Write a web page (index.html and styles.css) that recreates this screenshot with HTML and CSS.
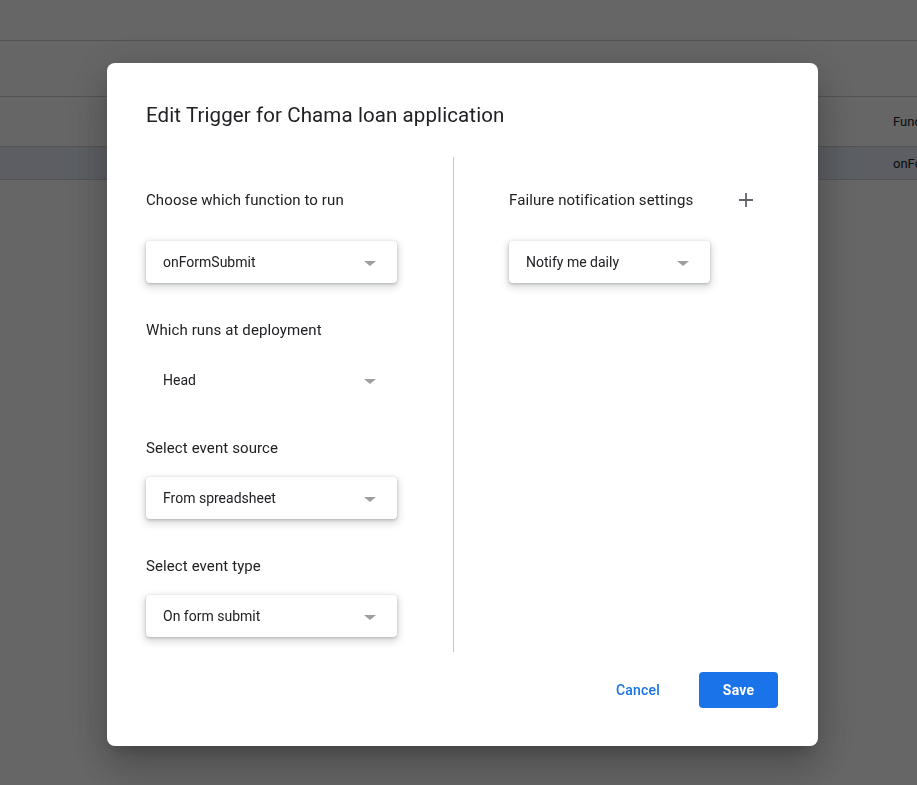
FILE: index.html
```html
<!DOCTYPE html>
<html lang="en">
<head>
<meta charset="utf-8">
<title>Edit Trigger</title>
<link rel="stylesheet" href="styles.css">
</head>
<body>
<div class="page">
  <div class="topbar"></div>
  <div class="toolbar"></div>
  <div class="table-head"><span class="cell">Function</span></div>
  <div class="table-row"><span class="cell">onFormSubmit</span></div>
</div>

<div class="overlay">
  <div class="dialog">
    <h1 class="title">Edit Trigger for Chama loan application</h1>
    <div class="content">
      <div class="col col-left">
        <div class="head-row"><span class="label">Choose which function to run</span></div>
        <div class="select raised"><span>onFormSubmit</span><i class="arrow"></i></div>

        <div class="label sect">Which runs at deployment</div>
        <div class="select flat"><span>Head</span><i class="arrow"></i></div>

        <div class="label sect">Select event source</div>
        <div class="select raised"><span>From spreadsheet</span><i class="arrow"></i></div>

        <div class="label sect">Select event type</div>
        <div class="select raised"><span>On form submit</span><i class="arrow"></i></div>
      </div>
      <div class="divider"></div>
      <div class="col col-right">
        <div class="head-row">
          <span class="label">Failure notification settings</span>
          <span class="plus">
            <svg width="16" height="16" viewBox="0 0 16 16"><path d="M8 1v14M1 8h14" stroke="#5f6368" stroke-width="1.8" fill="none"/></svg>
          </span>
        </div>
        <div class="select raised narrow"><span>Notify me daily</span><i class="arrow"></i></div>
      </div>
    </div>
    <div class="actions">
      <button class="btn btn-text">Cancel</button>
      <button class="btn btn-primary">Save</button>
    </div>
  </div>
</div>
</body>
</html>
```

FILE: styles.css
```css
* { box-sizing: border-box; }
html, body { margin: 0; padding: 0; }
body {
  width: 917px;
  height: 785px;
  overflow: hidden;
  background: #fff;
  font-family: Roboto, "Liberation Sans", Arial, sans-serif;
  color: #202124;
}

.page { width: 917px; }
.topbar { height: 41px; border-bottom: 1px solid #d0d0d0; }
.toolbar { height: 56px; border-bottom: 1px solid #d0d0d0; }
.table-head, .table-row {
  display: flex;
  align-items: center;
  padding-left: 893px;
  border-bottom: 1px solid #d0d0d0;
  font-size: 13px;
  color: #202124;
  overflow: hidden;
}
.table-head { height: 50px; }
.table-row { height: 33px; background: #e6ecf7; }
.cell { white-space: nowrap; }

.overlay {
  position: fixed;
  inset: 0;
  background: rgba(0, 0, 0, 0.6);
  padding: 63px 0 0 107px;
}

.dialog {
  width: 711px;
  height: 683px;
  background: #fff;
  border-radius: 8px;
  padding: 37px 40px 38px 39px;
  box-shadow: 0 24px 38px 3px rgba(0,0,0,.14), 0 9px 46px 8px rgba(0,0,0,.12), 0 11px 15px -7px rgba(0,0,0,.2);
  display: flex;
  flex-direction: column;
}

.title {
  margin: 0;
  font-size: 20.5px;
  line-height: 30px;
  font-weight: 400;
  color: #202124;
  letter-spacing: 0.1px;
}

.content {
  margin-top: 27px;
  height: 495px;
  display: flex;
}
.col { padding-top: 22px; }
.col-left { width: 307px; }
.divider { width: 1px; background: #c4c4c4; }
.col-right { padding-left: 55px; flex: 1; }

.head-row {
  height: 42px;
  display: flex;
  align-items: center;
  justify-content: space-between;
  margin-bottom: 20px;
}
.col-right .head-row { width: 250px; }
.plus { display: flex; align-items: center; justify-content: center; width: 20px; height: 20px; margin-right: 3px; }

.label {
  font-size: 15px;
  line-height: 20px;
  color: #202124;
  letter-spacing: 0.1px;
}
.sect { margin-top: 37px; margin-bottom: 19px; }

.select {
  width: 251px;
  height: 42px;
  border-radius: 4px;
  display: flex;
  align-items: center;
  justify-content: space-between;
  padding: 0 21px 0 17px;
  font-size: 14px;
  color: #202124;
}
.select.raised {
  background: #fff;
  box-shadow: 0 1px 3px rgba(60,64,67,.3), 0 3px 7px 2px rgba(60,64,67,.17);
}
.select.narrow { width: 201px; }
.arrow {
  width: 0;
  height: 0;
  border-left: 6px solid transparent;
  border-right: 6px solid transparent;
  border-top: 5px solid #9e9e9e;
  margin-top: 2px;
}

.actions {
  margin-top: 20px;
  display: flex;
  justify-content: flex-end;
  align-items: center;
  gap: 24px;
}
.btn {
  font-family: Roboto, "Liberation Sans", Arial, sans-serif;
  font-size: 14px;
  font-weight: 500;
  height: 36px;
  border: 0;
  border-radius: 4px;
  cursor: pointer;
  letter-spacing: 0.2px;
}
.btn-text { background: transparent; color: #1a73e8; padding: 0 15px; }
.btn-primary { background: #1a73e8; color: #fff; width: 79px; font-weight: 700; }
```
